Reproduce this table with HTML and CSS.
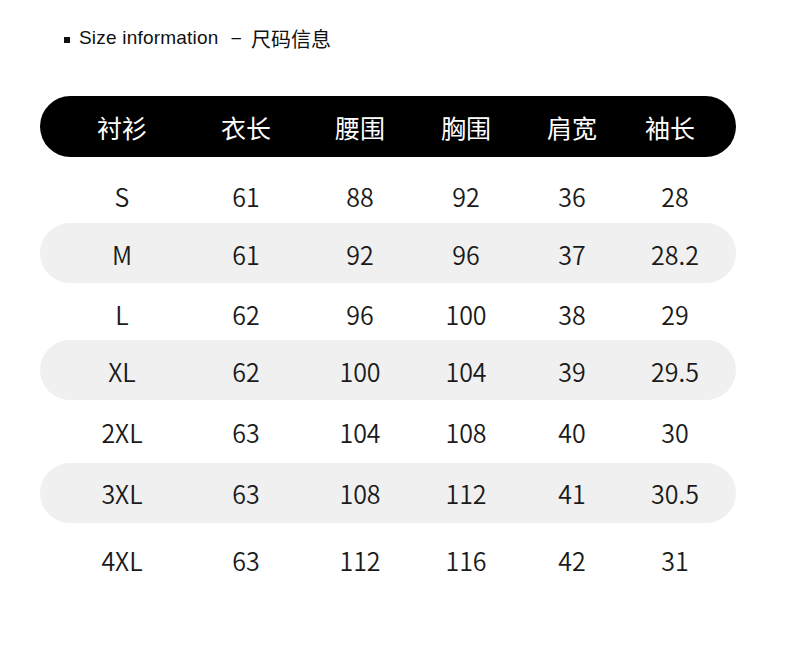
FILE: index.html
```html
<!DOCTYPE html>
<html lang="zh">
<head>
<meta charset="utf-8">
<title>Size information</title>
<link rel="stylesheet" href="styles.css">
</head>
<body>
<div class="page">
  <div class="title">
    <span class="bullet"></span>
    <span class="title-en">Size information</span>
    <span class="title-dash">–</span>
    <span class="title-cn">尺码信息</span>
  </div>
  <div class="table">
    <div class="row head"><span>衬衫</span><span>衣长</span><span>腰围</span><span>胸围</span><span>肩宽</span><span>袖长</span></div>
    <div class="row r-s"><span>S</span><span>61</span><span>88</span><span>92</span><span>36</span><span>28</span></div>
    <div class="row shade r-m"><span>M</span><span>61</span><span>92</span><span>96</span><span>37</span><span>28.2</span></div>
    <div class="row r-l"><span>L</span><span>62</span><span>96</span><span>100</span><span>38</span><span>29</span></div>
    <div class="row shade r-xl"><span>XL</span><span>62</span><span>100</span><span>104</span><span>39</span><span>29.5</span></div>
    <div class="row r-2xl"><span>2XL</span><span>63</span><span>104</span><span>108</span><span>40</span><span>30</span></div>
    <div class="row shade r-3xl"><span>3XL</span><span>63</span><span>108</span><span>112</span><span>41</span><span>30.5</span></div>
    <div class="row r-4xl"><span>4XL</span><span>63</span><span>112</span><span>116</span><span>42</span><span>31</span></div>
  </div>
</div>
</body>
</html>
```
FILE: styles.css
```css
html, body {
  margin: 0;
  padding: 0;
  background: #ffffff;
}
.page {
  width: 790px;
  height: 658px;
  padding-top: 24px;
  box-sizing: border-box;
}
.title {
  display: flex;
  align-items: center;
  height: 28px;
  padding-left: 64px;
  color: #111;
}
.bullet {
  width: 6px;
  height: 6px;
  background: #111;
  margin-right: 9px;
  margin-top: 3px;
}
.title-en {
  font-family: "Liberation Sans", Arial, sans-serif;
  font-size: 19px;
  letter-spacing: 0.2px;
}
.title-dash {
  font-family: "Liberation Sans", Arial, sans-serif;
  font-size: 17px;
  margin: 0 10px 0 13px;
}
.title-cn {
  font-family: "Noto Sans CJK SC", sans-serif;
  font-size: 20px;
}
.table {
  margin: 44px 54px 0 40px;
  width: 696px;
}
.row {
  display: grid;
  grid-template-columns: 136px 112px 116px 96px 116px 86px;
  padding-left: 14px;
  align-items: center;
  box-sizing: border-box;
  font-family: "Noto Sans CJK SC", "Noto Sans", sans-serif;
  font-size: 25px;
  font-weight: 350;
  line-height: 30px;
  color: #1a1a1a;
}
.row span {
  text-align: center;
  white-space: nowrap;
}
.row span:last-child {
  padding-left: 4px;
}
.head {
  height: 61px;
  background: #000;
  border-radius: 31px;
  color: #fff;
  font-size: 25px;
  font-weight: 400;
}
.head span:last-child {
  padding-left: 0;
  padding-right: 6px;
}
.shade {
  background: #f0f0f0;
  border-radius: 30px;
}
.r-s { height: 66px; padding-top: 12px; }
.r-m { height: 60px; padding-top: 1px; }
.r-l { height: 57px; padding-top: 4px; }
.r-xl { height: 60px; padding-top: 2px; }
.r-2xl { height: 63px; padding-top: 0; }
.r-3xl { height: 60px; padding-top: 0; }
.r-4xl { height: 74px; padding-top: 0; }
```
